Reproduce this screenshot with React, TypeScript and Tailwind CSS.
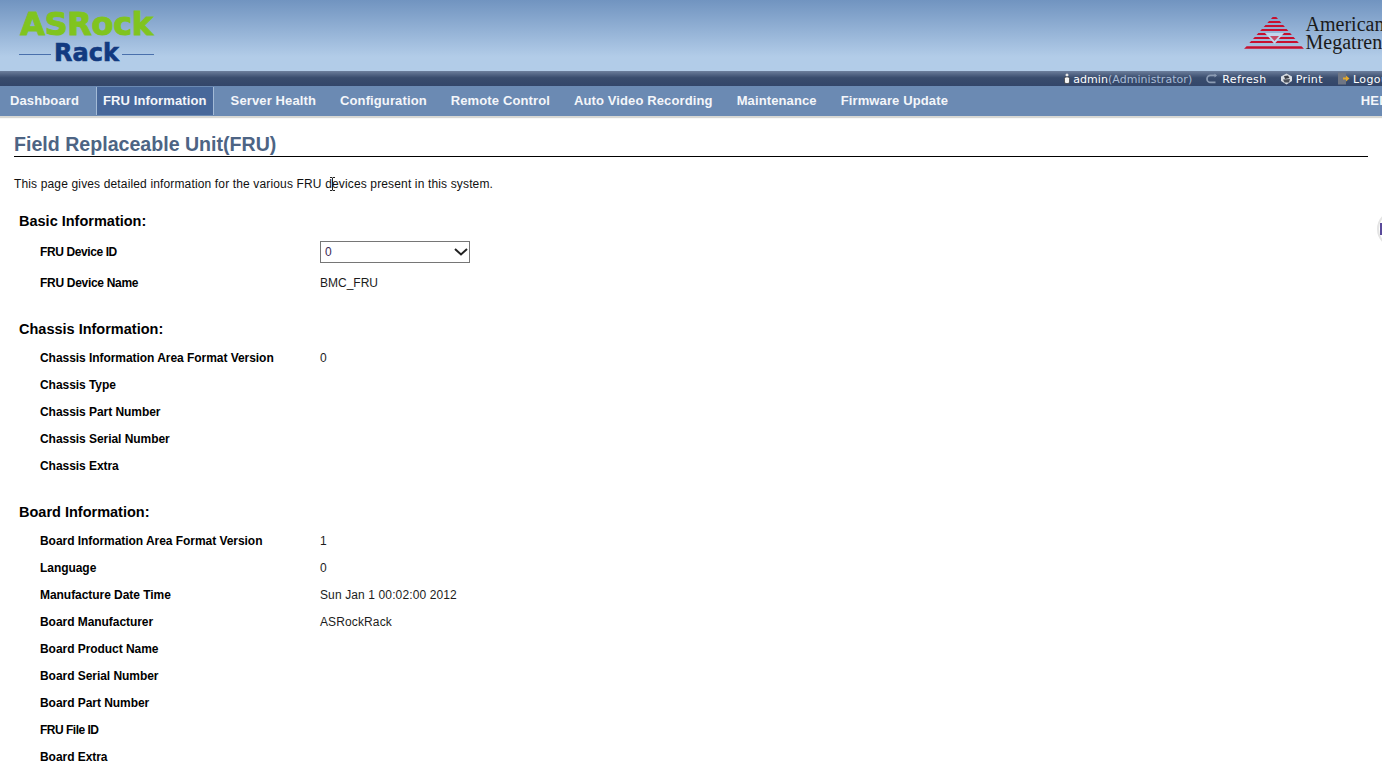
import React from 'react';

type Row = { label: string; value?: string };

const chassisRows: Row[] = [
  { label: 'Chassis Information Area Format Version', value: '0' },
  { label: 'Chassis Type' },
  { label: 'Chassis Part Number' },
  { label: 'Chassis Serial Number' },
  { label: 'Chassis Extra' },
];

const boardRows: Row[] = [
  { label: 'Board Information Area Format Version', value: '1' },
  { label: 'Language', value: '0' },
  { label: 'Manufacture Date Time', value: 'Sun Jan 1 00:02:00 2012' },
  { label: 'Board Manufacturer', value: 'ASRockRack' },
  { label: 'Board Product Name' },
  { label: 'Board Serial Number' },
  { label: 'Board Part Number' },
  { label: 'FRU File ID' },
  { label: 'Board Extra' },
];

const navItems = [
  'Dashboard',
  'FRU Information',
  'Server Health',
  'Configuration',
  'Remote Control',
  'Auto Video Recording',
  'Maintenance',
  'Firmware Update',
];

const AmiMark = () => (
  <svg width="60" height="34" viewBox="0 0 60 34" className="shrink-0">
    <defs>
      <clipPath id="ami-tri">
        <polygon points="30.5,0 60,34 0,34" />
      </clipPath>
    </defs>
    <g clipPath="url(#ami-tri)" stroke="#c8102e" strokeWidth="2.1">
      <line x1="0" y1="3" x2="60" y2="3" />
      <line x1="0" y1="7" x2="60" y2="7" />
      <line x1="0" y1="11" x2="60" y2="11" />
      <line x1="0" y1="15" x2="60" y2="15" />
      <line x1="0" y1="19" x2="60" y2="19" />
      <line x1="0" y1="23" x2="60" y2="23" />
      <line x1="0" y1="27" x2="60" y2="27" />
      <line x1="0" y1="32.5" x2="60" y2="32.5" strokeWidth="2.4" />
    </g>
    <polygon points="21,18 40,18 30.5,29" fill="#c3d6ec" />
    <polygon points="26,21 35,21 30.5,26" fill="#c8102e" opacity="0.7" />
  </svg>
);

const Header = () => (
  <div className="h-[71px] bg-gradient-to-b from-[#7194c0] to-[#b2cce8] to-80% flex justify-between overflow-hidden">
    <div className="ml-[19px] w-[135px] flex flex-col items-center">
      <div className="mt-[9px] mb-[4px] h-[30px] leading-[30px] text-[32px] font-bold text-[#80c41f] tracking-[-0.4px] [-webkit-text-stroke:1px_#80c41f] [font-family:'DejaVu_Sans',sans-serif]">
        ASRock
      </div>
      <div className="w-full flex items-center justify-between">
        <div className="h-px w-[32px] bg-[#4a70ac]" />
        <div className="h-[22px] leading-[20px] text-[24px] font-bold text-[#123a80] [-webkit-text-stroke:0.6px_#123a80] [font-family:'DejaVu_Sans',sans-serif]">
          Rack
        </div>
        <div className="h-px w-[32px] bg-[#4a70ac]" />
      </div>
    </div>
    <div className="flex items-start mr-[-18px] pt-[15px] gap-[2px]">
      <AmiMark />
      <div className="text-[20px] leading-[18px] text-[#1a1a1a] [font-family:'Liberation_Serif',serif]">
        <div>American</div>
        <div>Megatrends</div>
      </div>
    </div>
  </div>
);

const TopBar = () => (
  <div className="h-[15px] bg-gradient-to-b from-[#6d7f9c] via-[#3a4d6e] via-45% to-[#33466a] flex justify-end items-center overflow-hidden">
    <div className="flex items-center mt-[3px] mr-[-11px] text-[11px] text-white tracking-[0.4px] [font-family:'DejaVu_Sans',sans-serif]">
      <svg width="6" height="11" viewBox="0 0 6 11" className="mr-[3px] -mt-[3px]">
        <circle cx="3" cy="2" r="1.5" fill="#e8e8e8" />
        <rect x="0.5" y="4" width="5" height="6.5" rx="1.5" fill="#f5f5f5" stroke="#222" strokeWidth="0.6" />
      </svg>
      <span className="tracking-[0.05px]">admin</span>
      <span className="text-[#a9bcd6] tracking-[0.05px]">(Administrator)</span>
      <svg width="13" height="12" viewBox="0 0 13 12" className="ml-[13px] mr-[4px] -mt-[2px]" fill="none">
        <path d="M10.5 2.4H5.5a3.3 3.3 0 0 0 0 7h5" stroke="#8c9cb4" strokeWidth="1.7" />
        <path d="M9.5 0.5l2.6 2-2.6 2z" fill="#8c9cb4" />
      </svg>
      <span>Refresh</span>
      <svg width="13" height="12" viewBox="0 0 13 12" className="ml-[13px] mr-[3px] -mt-[2px]">
        <polygon points="6.5,0.5 12,3.5 12,8 6.5,11.5 1,8 1,3.5" fill="#d9dde3" />
        <polygon points="4,3 8,2.5 9.5,5 5,6" fill="#3a3f48" />
        <polygon points="3,6.5 10,6 9,9.5 4.5,9.5" fill="#4d525c" />
      </svg>
      <span>Print</span>
      <svg width="13" height="13" viewBox="0 0 13 13" className="ml-[14px] mr-[3px] -mt-[4px]">
        <rect x="1" y="0.5" width="8" height="12" fill="#6f7684" />
        <path d="M6 5.5h3V3.5l3.5 3-3.5 3V7.5H6z" fill="#e3a82b" />
      </svg>
      <span>Logout</span>
    </div>
  </div>
);

const Nav = () => (
  <div className="relative h-[30px] bg-[#6b8ab3] flex items-start pt-px pl-[3px] gap-[10px] shadow-[0_2px_1px_#d8d8d4] text-[13px] tracking-[0.12px] font-bold text-[#f4f6fa] overflow-hidden">
    {navItems.map((item) => (
      <div
        key={item}
        className={
          item === 'FRU Information'
            ? 'h-[28px] leading-[27px] px-[6px] border-x border-[#a3bad6] bg-[#48689a] whitespace-nowrap'
            : 'h-[28px] leading-[27px] px-[6px] border-x border-transparent whitespace-nowrap'
        }
      >
        {item}
      </div>
    ))}
    <div className="ml-auto mr-[-14px] leading-[27px]">HELP</div>
  </div>
);

const InfoRows = ({ rows }: { rows: Row[] }) => (
  <div className="pl-[40px]">
    {rows.map((row) => (
      <div key={row.label} className="h-[27px] flex items-center">
        <div
          className={
            row.label.startsWith('FRU')
              ? 'w-[280px] font-bold text-black tracking-[-0.5px]'
              : 'w-[280px] font-bold text-black tracking-[-0.05px]'
          }
        >
          {row.label}
        </div>
        <div className="text-[#1c1c1c] tracking-[0.12px]">{row.value}</div>
      </div>
    ))}
  </div>
);

const SectionTitle = ({ children }: { children: React.ReactNode }) => (
  <h2 className="h-[30px] leading-[30px] pl-[19px] text-[14.5px] font-bold text-black">{children}</h2>
);

export default function App() {
  return (
    <div className="relative h-[763px] overflow-hidden bg-white text-[12px] [font-family:'Liberation_Sans',Arial,sans-serif]">
      <Header />
      <TopBar />
      <Nav />

      <div className="pt-[14px]">
        <div className="mx-[14px] h-[27px] leading-[29px] border-b border-black text-[19.6px] font-bold text-[#4d6484]">
          Field Replaceable Unit(FRU)
        </div>
        <p className="pl-[14px] mt-[19px] h-[16px] leading-[16px] text-[#111] tracking-[0.146px]">
          This page gives detailed information for the various FRU devices present in this system.
        </p>

        <div className="mt-[14px]">
          <SectionTitle>Basic Information:</SectionTitle>
          <div className="pl-[40px] pt-[1px]">
            <div className="h-[30px] flex items-center">
              <div className="w-[280px] font-bold text-black tracking-[-0.4px]">FRU Device ID</div>
              <div className="relative w-[150px] h-[22px]">
                <select className="w-full h-full appearance-none border border-[#767676] bg-white pl-[4px] text-[12px] text-[#3d2a55] outline-none">
                  <option>0</option>
                </select>
                <svg width="14" height="8" viewBox="0 0 14 8" className="absolute right-[2px] top-[7px]" fill="none">
                  <path d="M1 1l6 5.5L13 1" stroke="#222" strokeWidth="2" />
                </svg>
              </div>
            </div>
            <div className="mt-px h-[30px] flex items-center">
              <div className="w-[280px] font-bold text-black tracking-[-0.3px]">FRU Device Name</div>
              <div className="text-[#1c1c1c]">BMC_FRU</div>
            </div>
          </div>
        </div>

        <div className="mt-[16px]">
          <SectionTitle>Chassis Information:</SectionTitle>
          <InfoRows rows={chassisRows} />
        </div>

        <div className="mt-[18px]">
          <SectionTitle>Board Information:</SectionTitle>
          <InfoRows rows={boardRows} />
        </div>
      </div>

      {/* mouse cursor caught in the screenshot */}
      <svg width="7" height="14" viewBox="0 0 7 14" className="absolute left-[329px] top-[177px]" fill="none">
        <path d="M1 0.5h2l.5.5.5-.5h2M3.5 1v12M1 13.5h2l.5-.5.5.5h2" stroke="#222" strokeWidth="1" />
      </svg>
      {/* edge of a floating circle, cut by the window */}
      <div className="absolute left-[1377px] top-[210px] w-[40px] h-[38px] rounded-full border-2 border-[#e4e4e4] flex items-center">
        <div className="ml-[1px] w-[2px] h-[12px] bg-[#5a4a9a]" />
      </div>
    </div>
  );
}
